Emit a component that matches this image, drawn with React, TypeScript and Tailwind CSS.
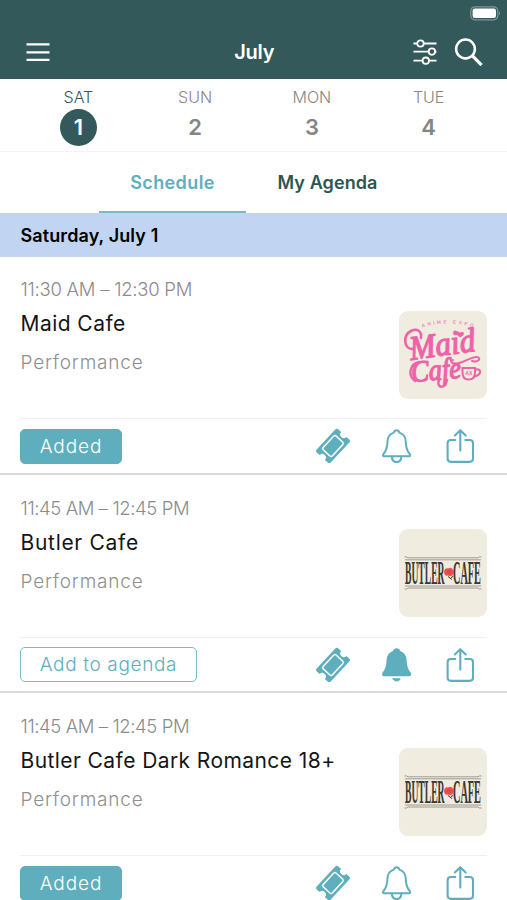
import clsx from "clsx";

type Event = {
    time: string;
    title: string;
    titleClass: string;
    timeClass: string;
    logo: "maid" | "butler";
    added: boolean;
    reminder: boolean;
};

const days = [
    { name: "SAT", date: 1 },
    { name: "SUN", date: 2 },
    { name: "MON", date: 3 },
    { name: "TUE", date: 4 },
];

const events: Event[] = [
    {
        time: "11:30 AM – 12:30 PM",
        title: "Maid Cafe",
        titleClass: "tracking-[0.45px]",
        timeClass: "tracking-[-0.25px]",
        logo: "maid",
        added: true,
        reminder: false,
    },
    {
        time: "11:45 AM – 12:45 PM",
        title: "Butler Cafe",
        titleClass: "tracking-[0.7px]",
        timeClass: "tracking-[-0.4px]",
        logo: "butler",
        added: false,
        reminder: true,
    },
    {
        time: "11:45 AM – 12:45 PM",
        title: "Butler Cafe Dark Romance 18+",
        titleClass: "tracking-[0.42px]",
        timeClass: "tracking-[-0.4px]",
        logo: "butler",
        added: true,
        reminder: false,
    },
];

function TicketIcon() {
    return (
        <svg viewBox="0 0 36 36" className="h-9 w-9">
            <g transform="translate(18 18) rotate(-47)">
                <path
                    d="M-13.6 -9.6H13.6Q15.8 -9.6 15.8 -7.4V-3.6A3.6 3.6 0 0 0 15.8 3.6V7.4Q15.8 9.6 13.6 9.6H-13.6Q-15.8 9.6 -15.8 7.4V3.6A3.6 3.6 0 0 0 -15.8 -3.6V-7.4Q-15.8 -9.6 -13.6 -9.6Z"
                    fill="#5faebd"
                />
                <rect x="-9.4" y="-6.2" width="18.8" height="12.4" rx="1.6" fill="none" stroke="#fff" strokeWidth="1.5" />
            </g>
        </svg>
    );
}

function BellIcon({ filled }: { filled: boolean }) {
    return (
        <svg viewBox="0 0 36 36" className="h-9 w-9" stroke="#5faebd" strokeWidth="2" strokeLinejoin="round" strokeLinecap="round">
            <path
                d="M17.6 2.3C16.2 2.3 15.2 3.2 14.8 4.6C11 5.8 8.6 9 8.5 13.4C8.4 19 7.9 21.8 4.5 26C3.5 27.3 3.9 28.2 5.2 28.2H30C31.3 28.2 31.7 27.3 30.7 26C27.3 21.8 26.8 19 26.7 13.4C26.6 9 24.2 5.8 20.4 4.6C20 3.2 19 2.3 17.6 2.3Z"
                fill={filled ? "#5faebd" : "none"}
            />
            {filled ? (
                <path d="M14 31.8H21.2C20.6 33.3 19.3 33.9 17.6 33.9S14.6 33.3 14 31.8Z" fill="#5faebd" strokeWidth="1" />
            ) : (
                <path d="M12.9 28.6C13 32 14.8 34 17.6 34S22.2 32 22.3 28.6" fill="none" />
            )}
        </svg>
    );
}

function ShareIcon() {
    return (
        <svg viewBox="0 0 36 36" className="h-9 w-9" fill="none" stroke="#5faebd" strokeWidth="2.1" strokeLinejoin="round" strokeLinecap="round">
            <path d="M13.3 12H8.9Q5.6 12 5.6 15.3V30.6Q5.6 33.9 8.9 33.9H27.7Q31 33.9 31 30.6V15.3Q31 12 27.7 12H23.3" />
            <path d="M18.3 22.6V2.6M12.9 7.4L18.3 2.2L23.7 7.4" />
        </svg>
    );
}

function MaidLogo() {
    return (
        <svg viewBox="0 0 88 88" className="h-[88px] w-[88px]">
            <path id="arc" d="M23 16.5Q50 8 78 17.5" fill="none" />
            <text fontFamily="Liberation Sans" fontWeight="700" fontSize="4.8" letterSpacing="2.4" fill="#f08ab8">
                <textPath href="#arc">ANIME EXPO</textPath>
            </text>
            <g fill="#ee62a9" stroke="#ee62a9" strokeWidth="1.3" strokeLinejoin="round" fontFamily="Liberation Serif" fontStyle="italic">
                <text transform="translate(12 49) rotate(-8) scale(0.92 1)" fontSize="34">Maid</text>
                <text transform="translate(13 71) rotate(-5) scale(0.88 1)" fontSize="30">Cafe</text>
            </g>
            <g fill="none" stroke="#ee62a9" strokeLinecap="round">
                <path d="M14 38C4 38 4 24 12 20C18 17 23 20 22 27" strokeWidth="2.6" />
                <path d="M54 49C50 50 53 54 60 52C68 50 74 45 78 46C83 47 79 52 73 50" strokeWidth="2" />
                <path d="M16 70C8 64 11 53 20 51" strokeWidth="2.4" />
                <path d="M40 69C37 77 46 79 48 69" strokeWidth="2.4" />
                <path d="M63.5 57H76V61.500Q76 68.500 69.700 68.500Q63.500 68.500 63.500 61.500Z" strokeWidth="2" fill="#f0ece0" />
                <path d="M76 58.500C83 57 83 64 75 65.500" strokeWidth="2" />
            </g>
            <text x="66.300" y="64.300" fontFamily="Liberation Sans" fontWeight="700" fontSize="5" fill="#ee62a9">AX</text>
            <path d="M61 26.500C56 23 57 20 59.500 20.500C61 21 61 22.500 61 22.500C61 22.500 62 19.500 64.500 21.500C66 23.500 63 25.500 61 26.500Z" fill="#ee62a9" />
        </svg>
    );
}

function ButlerLogo() {
    return (
        <svg viewBox="0 0 88 88" className="h-[88px] w-[88px]">
            <g fill="none" stroke="#8a867d" strokeWidth="0.8">
                <path d="M5.5 28Q8 27.500 9 28.800H79Q80 27.500 82.500 28M6 30.800H82" />
                <path d="M5.500 60Q8 60.500 9 59H79Q80 60.500 82.500 60M6 57H82" />
            </g>
            <g fill="#3b3733" stroke="#3b3733" strokeWidth="0.1" fontFamily="Liberation Serif" fontWeight="700">
                <text transform="translate(6 54.5) scale(0.6 2.05)" fontSize="16">BUTLER</text>
                <text transform="translate(54 54.5) scale(0.64 2.05)" fontSize="16">CAFE</text>
            </g>
            <path d="M45 42.500Q46 38.500 49 39.500Q52 37.500 54 40.500Q56 42.500 54 45.500Q52 48.500 49 46.500Q45 47.500 45 42.500Z" fill="#ee4f4f" />
            <path d="M48 42.500Q50 40.500 52 42.500Q51 45.500 48 43.500" fill="none" stroke="#c93640" strokeWidth="0.7" />
            <path d="M49 47.500L53 50.500M52 48.500L54 47.500" stroke="#37332f" strokeWidth="1" />
        </svg>
    );
}

function Header() {
    return (
        <header className="h-[79px] shrink-0 bg-[#33595a] text-white">
            <div className="flex h-[25px] justify-end pt-[6px] pr-[6px]">
                <svg viewBox="0 0 31 15" className="h-[15px] w-[31px]">
                    <rect x="0.8" y="0.8" width="27" height="13" rx="4" fill="none" stroke="#7d9897" strokeWidth="1.2" />
                    <rect x="2.6" y="2.6" width="23.4" height="9.4" rx="2.2" fill="#fff" />
                    <path d="M29 5.3Q31 7.3 29 9.3Z" fill="#7d9897" />
                </svg>
            </div>
            <div className="grid h-[53px] grid-cols-3 items-center pr-[22.5px] pl-[26px]">
                <svg viewBox="0 0 24 20" className="h-5 w-6" stroke="#fff" strokeWidth="2.1">
                    <path d="M0.5 2.4H23.5M0.5 10.4H23.5M0.5 17.9H23.5" />
                </svg>
                <h1 className="pr-[2px] text-center text-[20px] font-semibold tracking-[-0.3px]">July</h1>
                <div className="flex items-center justify-end gap-[17px]">
                    <svg viewBox="0 0 24 28" className="h-7 w-6" fill="none" stroke="#fff" strokeWidth="1.8">
                        <path d="M0.5 5.5H4.2M10.8 5.5H23.5M0.5 13.6H15.6M22.2 13.6H23.5M0.5 22.7H9.5M16.1 22.7H23.5" />
                        <circle cx="7.500" cy="5.5" r="3.2" />
                        <circle cx="18.9" cy="13.6" r="3.2" />
                        <circle cx="12.8" cy="22.7" r="3.2" />
                    </svg>
                    <svg viewBox="0 0 30 28" className="h-7 w-[30px]" fill="none" stroke="#fff" strokeWidth="2.5">
                        <circle cx="11.5" cy="11" r="9.4" />
                        <path d="M18.2 17.7L27.6 27.1" strokeWidth="3.2" />
                    </svg>
                </div>
            </div>
        </header>
    );
}

function EventCard({ event }: { event: Event }) {
    return (
        <article className="mb-px h-[217.5px] shrink-0 border-b-2 border-[#dcdcdc] bg-white pl-5">
            <div className="flex h-[161px] justify-between pr-5">
                <div className="pt-[20px] pl-[0.5px] whitespace-nowrap">
                    <p className={clsx("text-[18.5px] leading-6 font-light text-[#8b8b8b]", event.timeClass)}>{event.time}</p>
                    <h3 className={clsx("mt-[9px] text-[21px] leading-7 text-[#151515]", event.titleClass)}>{event.title}</h3>
                    <p className="mt-[13px] text-[19px] leading-6 font-light tracking-[0.8px] text-[#8f8f8f]">Performance</p>
                </div>
                <div className="mt-[53.5px] h-[88px] w-[88px] overflow-hidden rounded-[9px] bg-[#f0ece0]">
                    {event.logo === "maid" ? <MaidLogo /> : <ButlerLogo />}
                </div>
            </div>
            <div className="mr-5 flex h-[55px] items-center justify-between border-t border-[#f0f0f0] pr-[9px]">
                <button
                    className={clsx(
                        "h-[35px] rounded-[5px] border text-[19px] leading-none font-light whitespace-nowrap",
                        event.added
                            ? "w-[102px] border-[#5faebd] bg-[#5faebd] tracking-[0.9px] text-white"
                            : "w-[177px] border-[#7bbbc9] tracking-[0.65px] text-[#5faebd]"
                    )}
                >
                    {event.added ? "Added" : "Add to agenda"}
                </button>
                <div className="flex gap-[27.5px]">
                    <TicketIcon />
                    <BellIcon filled={event.reminder} />
                    <ShareIcon />
                </div>
            </div>
        </article>
    );
}

export default function App() {
    return (
        <div className="flex h-[900px] w-[507px] flex-col overflow-hidden bg-white font-['Inter',sans-serif]">
            <Header />

            <div className="grid h-[73px] shrink-0 grid-cols-4 border-b border-[#f3f3f5] px-5">
                {days.map((day, i) => (
                    <div key={day.name} className="flex flex-col items-center pt-2">
                        <span className={clsx("text-[16px] leading-5 font-light", i === 0 ? "text-[#33595a]" : "text-[#858585]")}>
                            {day.name}
                        </span>
                        <span
                            className={clsx(
                                "mt-[2px] flex h-[37px] w-[37px] items-center justify-center rounded-full text-[22px] font-semibold",
                                i === 0 ? "bg-[#33595a] text-white" : "text-[#858585]"
                            )}
                        >
                            {day.date}
                        </span>
                    </div>
                ))}
            </div>

            <nav className="flex h-[61px] shrink-0 gap-[8px] pl-[99px] text-[18px] font-semibold">
                <button className="w-[147px] border-b-2 border-[#7bbbc9] pt-[2px] tracking-[0.4px] text-[#5faebd]">Schedule</button>
                <button className="w-[147px] border-b-2 border-transparent pt-[2px] tracking-[0.1px] text-[#2c5650]">My Agenda</button>
            </nav>

            <h2 className="flex h-[44px] shrink-0 items-center bg-[#c1d5f2] pl-[20.5px] text-[18px] font-semibold tracking-[0.1px] text-black">
                Saturday, July 1
            </h2>

            {events.map((event) => (
                <EventCard key={event.title} event={event} />
            ))}
        </div>
    );
}
